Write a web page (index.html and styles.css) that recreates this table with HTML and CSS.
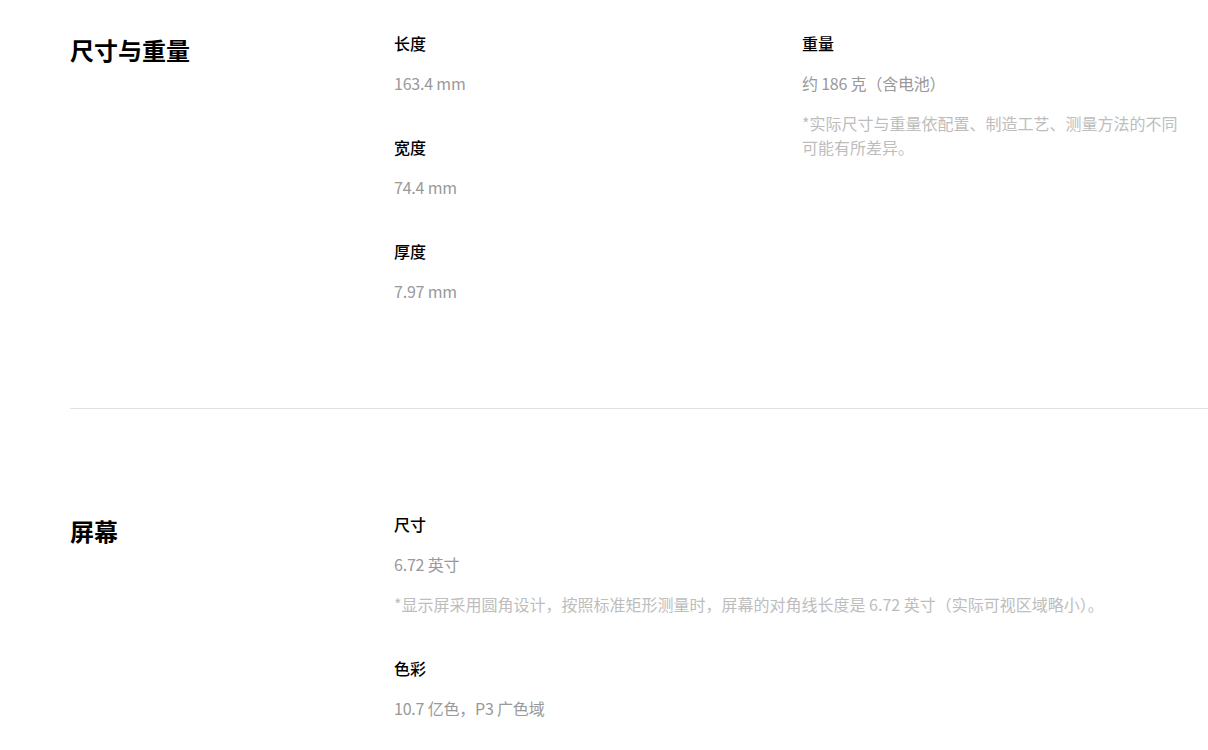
FILE: index.html
```html
<!DOCTYPE html>
<html lang="zh-CN">
<head>
<meta charset="utf-8">
<title>规格参数</title>
<link rel="stylesheet" href="styles.css">
</head>
<body>
<main class="specs">
  <section class="spec-section first">
    <h2 class="spec-title">尺寸与重量</h2>
    <div class="spec-grid">
      <div class="spec-col">
        <div class="spec-item">
          <div class="spec-label">长度</div>
          <div class="spec-value">163.4 mm</div>
        </div>
        <div class="spec-item">
          <div class="spec-label">宽度</div>
          <div class="spec-value">74.4 mm</div>
        </div>
        <div class="spec-item">
          <div class="spec-label">厚度</div>
          <div class="spec-value">7.97 mm</div>
        </div>
      </div>
      <div class="spec-col">
        <div class="spec-item">
          <div class="spec-label">重量</div>
          <div class="spec-value">约 186 克（含电池）</div>
          <div class="spec-note">*实际尺寸与重量依配置、制造工艺、测量方法的不同可能有所差异。</div>
        </div>
      </div>
    </div>
  </section>
  <section class="spec-section">
    <h2 class="spec-title">屏幕</h2>
    <div class="spec-list">
      <div class="spec-item">
        <div class="spec-label">尺寸</div>
        <div class="spec-value">6.72 英寸</div>
        <div class="spec-note">*显示屏采用圆角设计，按照标准矩形测量时，屏幕的对角线长度是 6.72 英寸（实际可视区域略小）。</div>
      </div>
      <div class="spec-item">
        <div class="spec-label">色彩</div>
        <div class="spec-value">10.7 亿色，P3 广色域</div>
      </div>
    </div>
  </section>
</main>
</body>
</html>
```
FILE: styles.css
```css
html, body {
  margin: 0;
  padding: 0;
  background: #fff;
}
body {
  font-family: "Noto Sans CJK SC", "Noto Sans", sans-serif;
  color: #000;
  overflow: hidden;
}
.specs {
  padding-left: 70px;
}
.spec-section {
  display: flex;
  padding: 103px 0 105px;
  border-top: 1px solid #e0e0e0;
}
.spec-section.first {
  padding-top: 31px;
  border-top: none;
}
.spec-title {
  width: 324px;
  flex: none;
  margin: 3px 0 0;
  font-size: 24px;
  line-height: 32px;
  font-weight: 700;
}
.spec-grid {
  display: grid;
  grid-template-columns: 384px 384px;
  column-gap: 24px;
}
.spec-col, .spec-list {
  display: flex;
  flex-direction: column;
  gap: 40px;
}
.spec-item {
  display: flex;
  flex-direction: column;
  gap: 16px;
}
.spec-label {
  font-size: 16px;
  line-height: 24px;
  font-weight: 500;
}
.spec-value {
  font-size: 16px;
  line-height: 24px;
  color: #999;
  letter-spacing: -0.2px;
}
.spec-note {
  font-size: 16px;
  line-height: 24px;
  color: #bdbdbd;
}
```
